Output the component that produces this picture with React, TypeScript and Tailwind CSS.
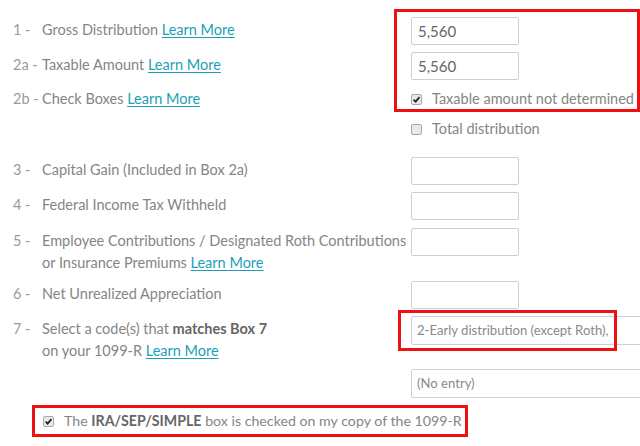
import React from "react";

const LinkMore = () => (
  <a href="#" className="text-[#1a9fb5] underline underline-offset-2">
    Learn More
  </a>
);

function Check({ checked }: { checked?: boolean }) {
  return (
    <span className="inline-flex h-[11px] w-[11px] shrink-0 items-center justify-center rounded-[2px] border border-[#a9a9a9] bg-[#e9e9e9]">
      {checked && (
        <svg viewBox="0 0 10 10" className="h-[9px] w-[9px]">
          <path d="M1.8 5.2 L4 7.4 L8.3 2.4" fill="none" stroke="#222" strokeWidth="1.9" />
        </svg>
      )}
    </span>
  );
}

function Box({ value }: { value?: string }) {
  return (
    <div className="flex h-[28px] w-[108px] items-center rounded-[2px] border border-[#cfcfcf] bg-white px-[6px] text-[15px] text-[#666]">
      {value}
    </div>
  );
}

function SelectBox({ value }: { value: string }) {
  return (
    <div className="flex h-[29px] w-[260px] shrink-0 items-center rounded-[2px] border border-[#cfcfcf] bg-white px-[5px] text-[13.1px] text-[#8a8a8a]">
      {value}
    </div>
  );
}

function Row({
  num,
  h,
  children,
  right,
}: {
  num?: string;
  h: string;
  children?: React.ReactNode;
  right?: React.ReactNode;
}) {
  return (
    <div className={`flex ${h}`}>
      <div className="w-[42px] shrink-0 pl-[13px] pt-[2px] leading-[22px] text-[#9a9a9a]">{num}</div>
      <div className="w-[369px] shrink-0 pt-[2px] leading-[22px]">{children}</div>
      <div className="shrink-0">{right}</div>
    </div>
  );
}

export default function App() {
  return (
    <div
      className="relative h-[446px] w-[640px] overflow-hidden bg-white text-[14.5px] text-[#858585]"
      style={{ fontFamily: "Lato, 'Open Sans', sans-serif" }}
    >
      <div className="pt-[17px]">
        <Row num="1 -" h="h-[35px]" right={<Box value="5,560" />}>
          Gross Distribution <LinkMore />
        </Row>
        <Row num="2a -" h="h-[36px]" right={<Box value="5,560" />}>
          Taxable Amount <LinkMore />
        </Row>
        <div className="flex h-[30px]">
          <div className="w-[42px] shrink-0 pl-[13px] leading-[22px] text-[#9a9a9a]">2b -</div>
          <div className="w-[369px] shrink-0 leading-[22px]">
            Check Boxes <LinkMore />
          </div>
          <div className="flex shrink-0 items-center gap-[10px] self-start leading-[22px]">
            <Check checked />
            <span>Taxable amount not determined</span>
          </div>
        </div>
        <div className="flex h-[39px]">
          <div className="w-[411px] shrink-0" />
          <div className="flex items-center gap-[10px] self-start leading-[22px]">
            <Check />
            <span>Total distribution</span>
          </div>
        </div>
        <Row num="3 -" h="h-[35px]" right={<Box />}>
          Capital Gain (Included in Box 2a)
        </Row>
        <Row num="4 -" h="h-[36px]" right={<Box />}>
          Federal Income Tax Withheld
        </Row>
        <Row num="5 -" h="h-[53px]" right={<Box />}>
          Employee Contributions / Designated Roth Contributions
          <br />
          or Insurance Premiums <LinkMore />
        </Row>
        <Row num="6 -" h="h-[35px]" right={<Box />}>
          Net Unrealized Appreciation
        </Row>
        <Row num="7 -" h="h-[53px]" right={<SelectBox value="2-Early distribution (except Roth)," />}>
          Select a code(s) that <b className="font-bold text-[#666]">matches Box 7</b>
          <br />
          on your 1099-R <LinkMore />
        </Row>
        <Row h="h-[36px]" right={<SelectBox value="(No entry)" />} />
        <div className="ml-[32px] flex h-[32px] w-[436px] items-center gap-[10px] whitespace-nowrap border-[3px] border-[#ee1111] pl-[8px] text-[14.2px]">
          <Check checked />
          <span>
            The <b className="font-bold text-[#666]">IRA/SEP/SIMPLE</b> box is checked on my copy of the 1099-R
          </span>
        </div>
      </div>

      <div className="absolute left-[394px] top-[9px] h-[103px] w-[246px] border-[3px] border-[#ee1111]" />
      <div className="absolute left-[398px] top-[310px] h-[41px] w-[219px] border-[3px] border-[#ee1111]" />
    </div>
  );
}
